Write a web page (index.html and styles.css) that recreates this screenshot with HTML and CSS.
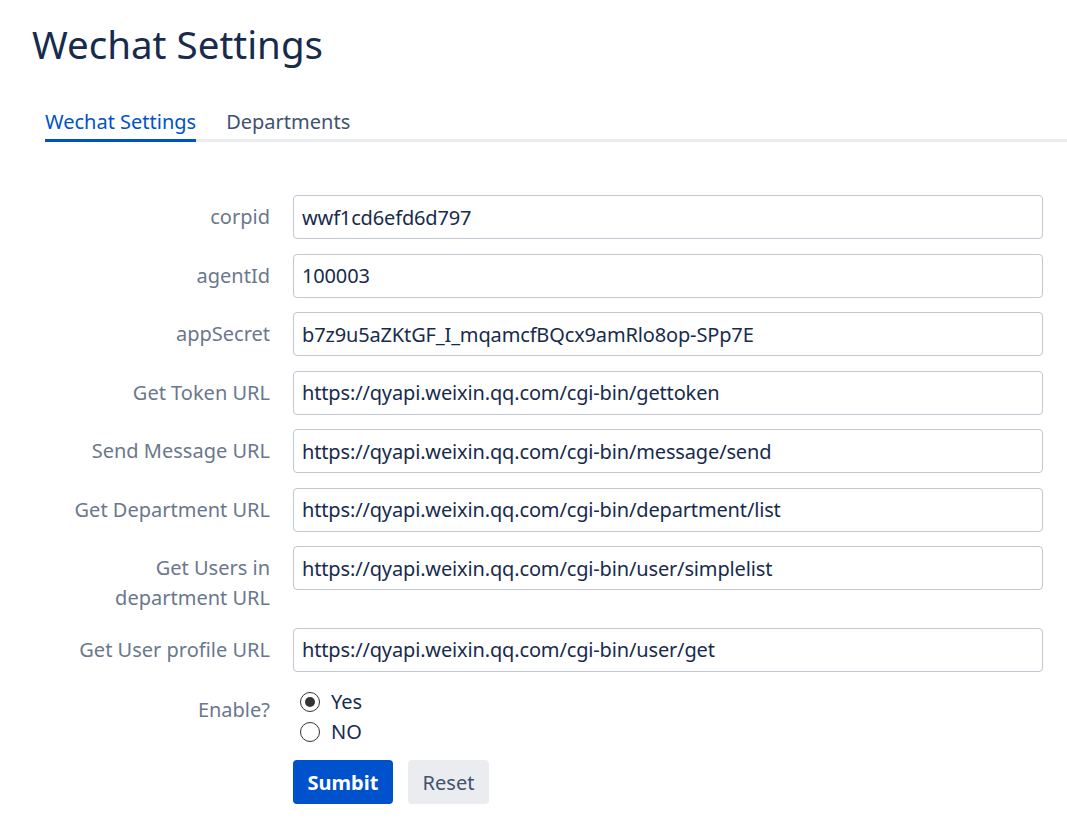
FILE: index.html
```html
<!DOCTYPE html>
<html lang="en">
<head>
<meta charset="utf-8">
<title>Wechat Settings</title>
<link rel="stylesheet" href="styles.css">
</head>
<body>
<div class="page">
  <h1 class="title">Wechat Settings</h1>
  <div class="tabs">
    <a class="tab tab-active">Wechat Settings</a>
    <a class="tab">Departments</a>
  </div>
  <form class="form">
    <div class="row"><label class="label">corpid</label><input class="field" type="text" value="wwf1cd6efd6d797"></div>
    <div class="row"><label class="label">agentId</label><input class="field" type="text" value="100003"></div>
    <div class="row"><label class="label">appSecret</label><input class="field" type="text" value="b7z9u5aZKtGF_I_mqamcfBQcx9amRlo8op-SPp7E"></div>
    <div class="row"><label class="label">Get Token URL</label><input class="field" type="text" value="https://qyapi.weixin.qq.com/cgi-bin/gettoken"></div>
    <div class="row"><label class="label">Send Message URL</label><input class="field" type="text" value="https://qyapi.weixin.qq.com/cgi-bin/message/send"></div>
    <div class="row"><label class="label">Get Department URL</label><input class="field" type="text" value="https://qyapi.weixin.qq.com/cgi-bin/department/list"></div>
    <div class="row"><label class="label">Get Users in department URL</label><input class="field" type="text" value="https://qyapi.weixin.qq.com/cgi-bin/user/simplelist"></div>
    <div class="row"><label class="label">Get User profile URL</label><input class="field" type="text" value="https://qyapi.weixin.qq.com/cgi-bin/user/get"></div>
    <div class="row row-radio">
      <span class="label label-radio">Enable?</span>
      <div class="radios">
        <label class="radio"><input class="radio-input" type="radio" name="enable" checked><span>Yes</span></label>
        <label class="radio"><input class="radio-input" type="radio" name="enable"><span>NO</span></label>
      </div>
    </div>
    <div class="row row-buttons">
      <span class="label"></span>
      <div class="buttons">
        <button class="btn btn-primary" type="button">Sumbit</button>
        <button class="btn btn-default" type="button">Reset</button>
      </div>
    </div>
  </form>
</div>
</body>
</html>
```
FILE: styles.css
```css
html, body {
  margin: 0;
  padding: 0;
  background: #ffffff;
}
body {
  font-family: "Noto Sans", "Open Sans", sans-serif;
  color: #172b4d;
  font-size: 20px;
}
.page {
  padding: 18px 0 20px 32px;
}
.title {
  margin: 0;
  font-size: 38.5px;
  font-weight: 400;
  line-height: 52px;
  color: #172b4d;
}
.tabs {
  margin: 31px 0 0 13px;
  display: flex;
  gap: 30px;
  border-bottom: 3px solid #ebecf0;
}
.tab {
  font-size: 20px;
  line-height: 30px;
  color: #42526e;
  padding: 6px 0 2px;
  margin-bottom: -3px;
  border-bottom: 3px solid transparent;
}
.tab-active {
  color: #0052cc;
  border-bottom-color: #0052cc;
}
.form {
  margin: 53px 0 0 38px;
  width: 973px;
  display: flex;
  flex-direction: column;
  gap: 14.5px;
}
.row {
  display: flex;
  align-items: flex-start;
  gap: 23px;
}
.label {
  width: 200px;
  flex: none;
  text-align: right;
  color: #6b778c;
  font-size: 20px;
  line-height: 30px;
  padding-top: 7px;
}
.field {
  width: 750px;
  height: 44px;
  box-sizing: border-box;
  border: 1px solid #c1c7d0;
  border-radius: 4px;
  padding: 0 8px;
  font-family: "Noto Sans", "Open Sans", sans-serif;
  font-size: 20px;
  letter-spacing: -0.15px;
  color: #172b4d;
  background: #ffffff;
  outline: none;
}
.label-radio {
  padding-top: 9px;
}
.radios {
  display: flex;
  flex-direction: column;
  padding-top: 1px;
  padding-left: 7px;
}
.radio {
  display: flex;
  align-items: center;
  gap: 11px;
  line-height: 30px;
  font-size: 20px;
  color: #172b4d;
}
.radio-input {
  appearance: none;
  -webkit-appearance: none;
  margin: 0;
  width: 20px;
  height: 20px;
  border: 1.5px solid #333333;
  border-radius: 50%;
  box-sizing: border-box;
  display: grid;
  place-items: center;
  background: #ffffff;
}
.radio-input:checked::after {
  content: "";
  width: 10px;
  height: 10px;
  border-radius: 50%;
  background: #333333;
}
.row-buttons {
  margin-top: -1.5px;
}
.row-buttons .label {
  padding-top: 0;
}
.buttons {
  display: flex;
  gap: 15px;
}
.btn {
  height: 44px;
  border: none;
  border-radius: 4px;
  font-family: "Noto Sans", "Open Sans", sans-serif;
  font-size: 20px;
  padding: 0 10px;
  cursor: pointer;
}
.btn-primary {
  background: #0052cc;
  color: #ffffff;
  font-weight: 700;
  width: 100px;
}
.btn-default {
  background: #ebecf0;
  color: #42526e;
  width: 81px;
}
```
